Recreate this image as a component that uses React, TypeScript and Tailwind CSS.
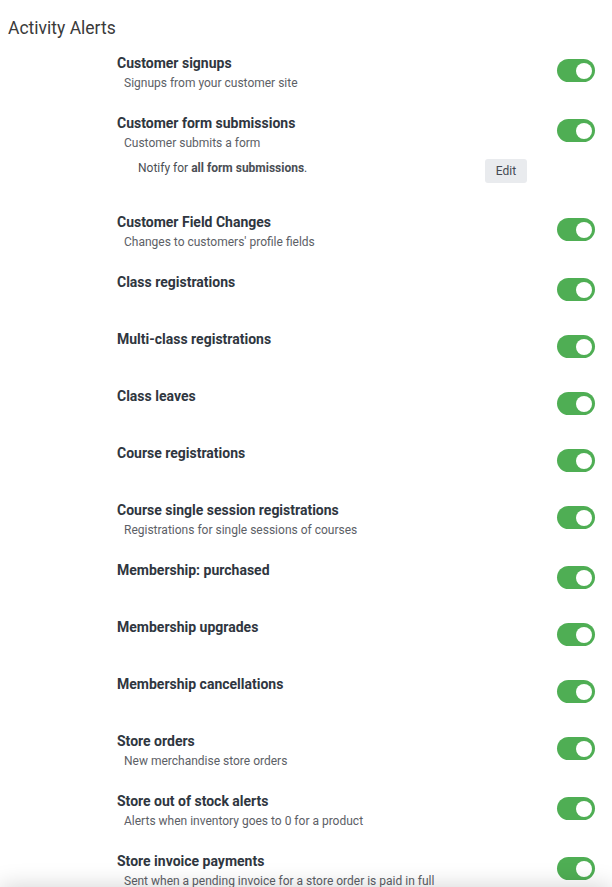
import React from "react";

type Row = { title: string; desc?: string; extra?: boolean };

const rows: Row[] = [
  { title: "Customer signups", desc: "Signups from your customer site" },
  { title: "Customer form submissions", desc: "Customer submits a form", extra: true },
  { title: "Customer Field Changes", desc: "Changes to customers' profile fields" },
  { title: "Class registrations" },
  { title: "Multi-class registrations" },
  { title: "Class leaves" },
  { title: "Course registrations" },
  { title: "Course single session registrations", desc: "Registrations for single sessions of courses" },
  { title: "Membership: purchased" },
  { title: "Membership upgrades" },
  { title: "Membership cancellations" },
  { title: "Store orders", desc: "New merchandise store orders" },
  { title: "Store out of stock alerts", desc: "Alerts when inventory goes to 0 for a product" },
  { title: "Store invoice payments", desc: "Sent when a pending invoice for a store order is paid in full" },
];

function Toggle() {
  return (
    <div className="mt-[6px] flex h-[23px] w-[38px] shrink-0 items-center justify-end rounded-full bg-[#4fae54] pr-[3px]">
      <div className="h-[16px] w-[16px] rounded-full bg-white" />
    </div>
  );
}

export default function App() {
  return (
    <div className="relative min-h-[887px] bg-white font-['Roboto',sans-serif]">
      <div className="pl-[8px] pt-[17px] text-[17.5px] leading-[22px] text-[#3a3a3a]">Activity Alerts</div>
      <div className="mt-[14px] pl-[117px] pr-[17px]">
        {rows.map((r) => (
          <div key={r.title} className="mb-[20px] flex min-h-[37px] items-start justify-between">
            <div className="flex-1 pr-[30px]">
              <div className="text-[14px] font-bold leading-[20px] text-[#2f3640]">{r.title}</div>
              {r.desc && (
                <div className="pl-[7px] text-[12px] leading-[20px] text-[#5c6066]">{r.desc}</div>
              )}
              {r.extra && (
                <div className="mt-[6px] mb-[9px] flex items-start justify-between pl-[21px]">
                  <div className="text-[12px] leading-[18px] text-[#4a4e54]">
                    Notify for <span className="font-bold">all form submissions</span>.
                  </div>
                  <button className="h-[24px] w-[42px] rounded-[3px] bg-[#e9ebee] text-[12px] text-[#444a52]">
                    Edit
                  </button>
                </div>
              )}
            </div>
            <Toggle />
          </div>
        ))}
      </div>
      <div className="fixed left-0 right-0 top-[887px] h-[40px] bg-white shadow-[0_0_24px_rgba(0,0,0,0.18)]" />
    </div>
  );
}
